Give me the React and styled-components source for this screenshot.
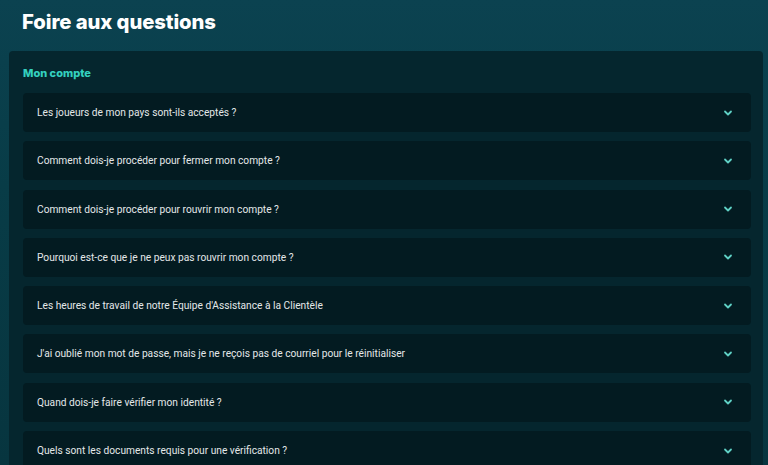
import React from 'react';
import styled, { createGlobalStyle } from 'styled-components';

const GlobalStyle = createGlobalStyle`
  html, body {
    margin: 0;
    padding: 0;
    background: #083a45;
  }
  body {
    font-family: "Roboto", "Liberation Sans", sans-serif;
  }
`;

const Page = styled.div`
  background: linear-gradient(180deg, #0b4250 0%, #083c47 40%, #07353f 100%);
  padding: 0 5px 0 9px;
  box-sizing: border-box;
  overflow: hidden;
  height: 465px;
`;

const Title = styled.h1`
  margin: 0;
  padding: 9px 0 0 13px;
  height: 51px;
  box-sizing: border-box;
  font-family: "Inter", "Liberation Sans", sans-serif;
  font-weight: 800;
  font-size: 20.3px;
  letter-spacing: -0.1px;
  color: #ffffff;
`;

const Panel = styled.section`
  background: #05262e;
  border-radius: 4px;
  padding: 15px 12px 0 14px;
  display: flex;
  flex-direction: column;
  gap: 9px;
`;

const SectionTitle = styled.h2`
  margin: 0;
  height: 18px;
  font-family: "Inter", "Liberation Sans", sans-serif;
  font-weight: 800;
  font-size: 11px;
  color: #34d0bf;
`;

const List = styled.div`
  display: flex;
  flex-direction: column;
  gap: 9.3px;
`;

const Item = styled.div`
  height: 39px;
  background: #031b21;
  border-radius: 4px;
  display: flex;
  align-items: center;
  justify-content: space-between;
  padding: 0 18px 0 14px;
`;

const Question = styled.span`
  font-size: 10.2px;
  color: #e3e8e9;
`;

const Chevron = styled.svg`
  width: 10px;
  height: 10px;
  flex-shrink: 0;
`;

const questions = [
  'Les joueurs de mon pays sont-ils acceptés ?',
  'Comment dois-je procéder pour fermer mon compte ?',
  'Comment dois-je procéder pour rouvrir mon compte ?',
  'Pourquoi est-ce que je ne peux pas rouvrir mon compte ?',
  "Les heures de travail de notre Équipe d'Assistance à la Clientèle",
  "J'ai oublié mon mot de passe, mais je ne reçois pas de courriel pour le réinitialiser",
  'Quand dois-je faire vérifier mon identité ?',
  'Quels sont les documents requis pour une vérification ?',
];

const App = () => (
  <Page>
    <GlobalStyle />
    <Title>Foire aux questions</Title>
    <Panel>
      <SectionTitle>Mon compte</SectionTitle>
      <List>
        {questions.map((q) => (
          <Item key={q}>
            <Question>{q}</Question>
            <Chevron viewBox="0 0 10 10">
              <path d="M2 3.5 L5 6.5 L8 3.5" fill="none" stroke="#5fd0c4" strokeWidth="1.8" strokeLinecap="round" strokeLinejoin="round" />
            </Chevron>
          </Item>
        ))}
      </List>
    </Panel>
  </Page>
);

export default App;
